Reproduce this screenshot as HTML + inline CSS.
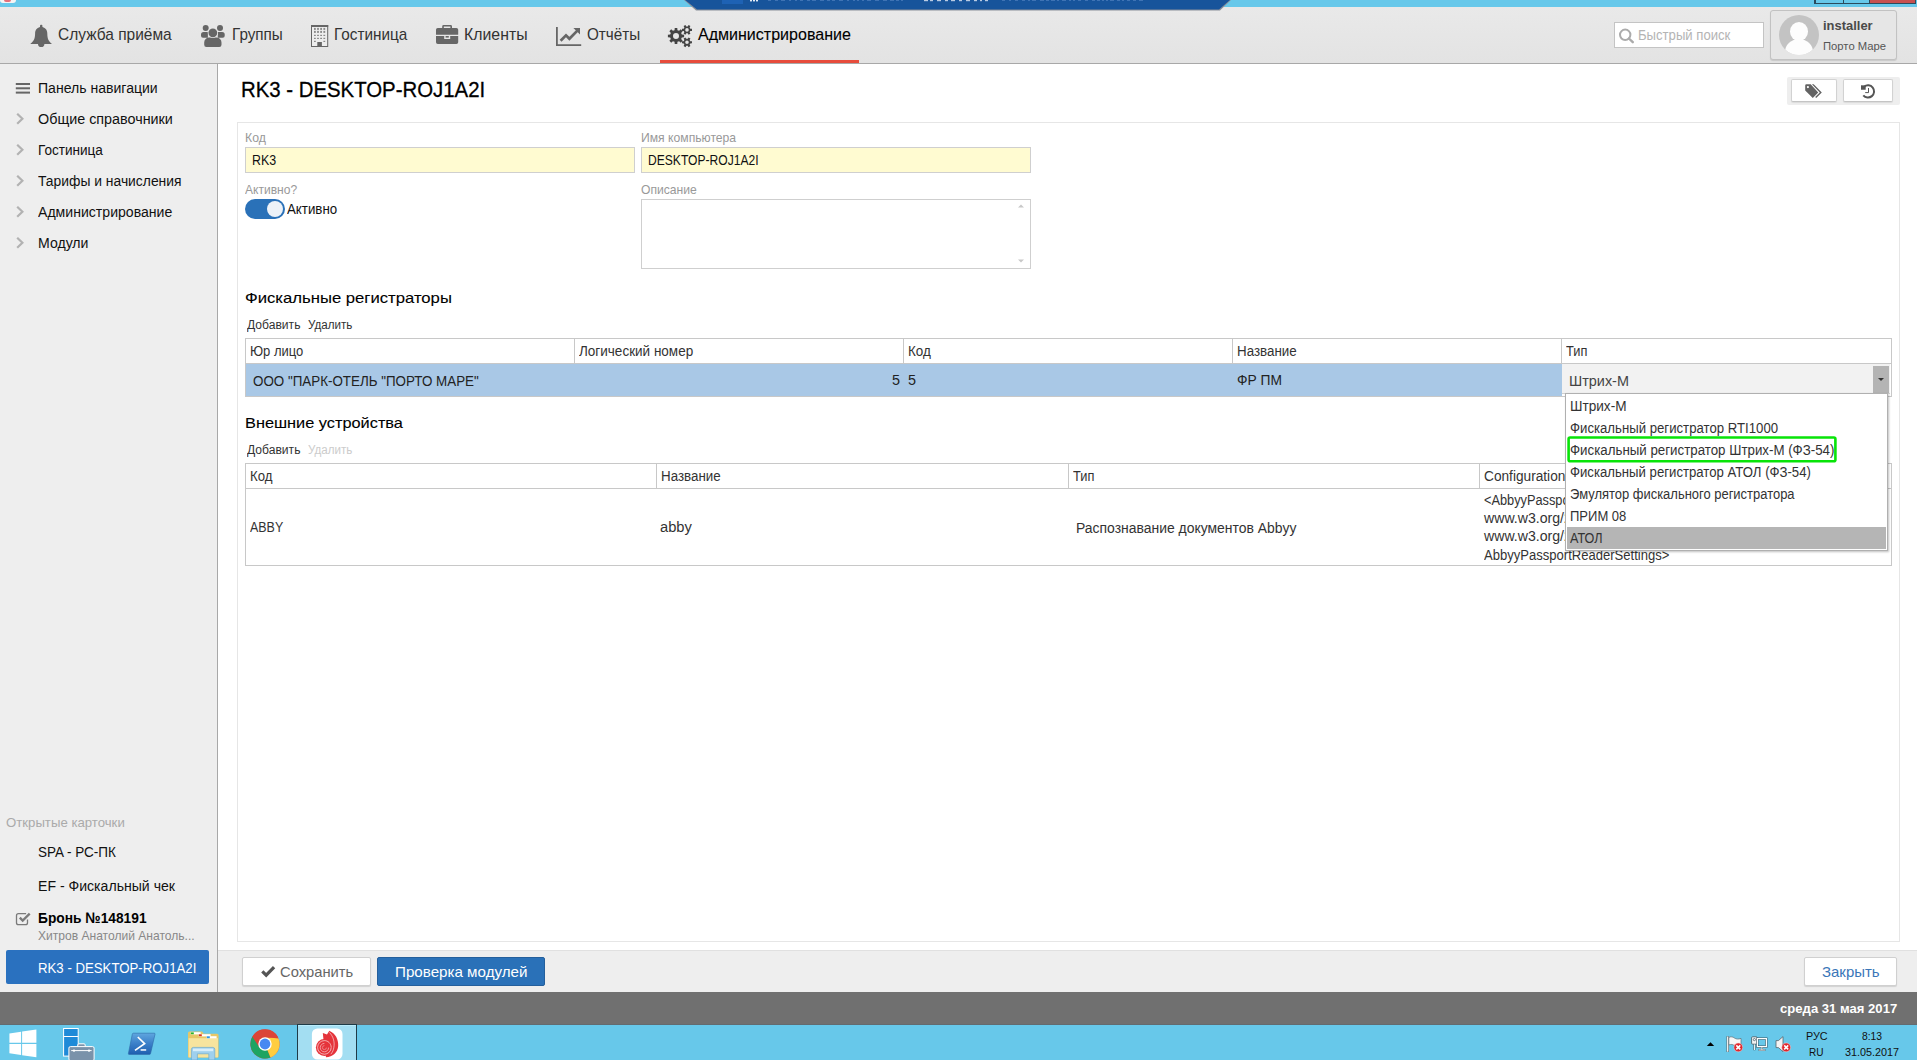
<!DOCTYPE html>
<html lang="ru"><head><meta charset="utf-8"><title>RK3 - DESKTOP-ROJ1A2I</title>
<style>
*{box-sizing:border-box;margin:0;padding:0}
html,body{width:1917px;height:1060px;overflow:hidden;background:#fff;font-family:"Liberation Sans",sans-serif}
body{position:relative}
.a,.t,svg{position:absolute}
.t{white-space:nowrap;line-height:1;display:block;transform-origin:0 0}

</style></head>
<body>
<!-- window title strip -->
<div class="a" style="left:0;top:0;width:1917px;height:7px;background:#67c8ea"></div>
<!-- navbar -->
<div class="a" style="left:0;top:7px;width:1917px;height:57px;background:linear-gradient(#e9e9e9,#e3e3e3);border-bottom:1px solid #a8a8a8"></div>
<!-- rdp tab -->
<svg style="left:680px;top:0" width="556" height="12" viewBox="0 0 556 12"><polygon points="4,0 551,0 540,10.5 16,10.5" fill="#8a8f99"/><polygon points="5,0 550,0 539,9.5 17,9.5" fill="#17549b"/><rect x="42" y="0" width="21" height="4" fill="#1e62b4"/><g fill="#e6edf6"><rect x="70" y="0" width="2" height="1.4"/><rect x="73" y="0" width="2" height="1.4"/><rect x="76" y="0" width="2" height="1.4"/></g><g fill="#3f73b4"><rect x="88" y="0" width="3" height="1"/><rect x="95" y="0" width="3" height="1"/><rect x="101" y="0" width="4" height="1"/><rect x="109" y="0" width="2" height="1"/><rect x="115" y="0" width="2" height="1"/><rect x="120" y="0" width="3" height="1"/><rect x="127" y="0" width="3" height="1"/><rect x="132" y="0" width="4" height="1"/><rect x="140" y="0" width="4" height="1"/><rect x="147" y="0" width="3" height="1"/><rect x="152" y="0" width="3" height="1"/><rect x="159" y="0" width="4" height="1"/><rect x="167" y="0" width="2" height="1"/><rect x="173" y="0" width="2" height="1"/><rect x="177" y="0" width="2" height="1"/><rect x="182" y="0" width="2" height="1"/><rect x="187" y="0" width="4" height="1"/><rect x="195" y="0" width="4" height="1"/><rect x="203" y="0" width="4" height="1"/><rect x="210" y="0" width="4" height="1"/><rect x="216" y="0" width="3" height="1"/><rect x="221" y="0" width="2" height="1"/></g><g fill="#b9cbe3"><rect x="244" y="0" width="4" height="1.2"/><rect x="250" y="0" width="3" height="1.2"/><rect x="257" y="0" width="4" height="1.2"/><rect x="265" y="0" width="3" height="1.2"/><rect x="271" y="0" width="4" height="1.2"/><rect x="279" y="0" width="3" height="1.2"/><rect x="286" y="0" width="4" height="1.2"/><rect x="294" y="0" width="3" height="1.2"/><rect x="300" y="0" width="2" height="1.2"/><rect x="305" y="0" width="3" height="1.2"/></g><g fill="#3f73b4"><rect x="322" y="0" width="3" height="1"/><rect x="329" y="0" width="2" height="1"/><rect x="335" y="0" width="3" height="1"/><rect x="342" y="0" width="3" height="1"/><rect x="348" y="0" width="2" height="1"/><rect x="352" y="0" width="4" height="1"/><rect x="360" y="0" width="4" height="1"/><rect x="366" y="0" width="3" height="1"/><rect x="371" y="0" width="4" height="1"/><rect x="377" y="0" width="2" height="1"/><rect x="382" y="0" width="4" height="1"/><rect x="389" y="0" width="2" height="1"/><rect x="393" y="0" width="2" height="1"/><rect x="398" y="0" width="3" height="1"/><rect x="405" y="0" width="3" height="1"/><rect x="412" y="0" width="3" height="1"/><rect x="417" y="0" width="3" height="1"/><rect x="422" y="0" width="2" height="1"/><rect x="426" y="0" width="2" height="1"/><rect x="430" y="0" width="4" height="1"/><rect x="437" y="0" width="3" height="1"/><rect x="442" y="0" width="2" height="1"/><rect x="447" y="0" width="3" height="1"/><rect x="453" y="0" width="3" height="1"/><rect x="459" y="0" width="4" height="1"/></g></svg>
<!-- window buttons -->
<div class="a" style="left:1814px;top:0;width:102px;height:4px;background:#2b4a5c"></div>
<div class="a" style="left:1816px;top:0;width:27px;height:3px;background:#67c8ea"></div>
<div class="a" style="left:1844px;top:0;width:25px;height:3px;background:#67c8ea"></div>
<div class="a" style="left:1870px;top:0;width:45px;height:3px;background:#c75050"></div>
<!-- app icon top-left -->
<div class="a" style="left:0;top:0;width:16px;height:3px;background:#f4f4f4;border-radius:0 0 4px 4px"></div>
<div class="a" style="left:4px;top:0;width:7px;height:2px;background:#e4707a;border-radius:0 0 4px 4px"></div>
<!-- active nav underline -->
<div class="a" style="left:660px;top:60px;width:199px;height:3px;background:#e74c3c"></div>
<!-- search -->
<div class="a" style="left:1614px;top:22px;width:150px;height:26px;background:#fff;border:1px solid #c4c4c4"></div>
<!-- user box -->
<div class="a" style="left:1770px;top:10px;width:127px;height:50px;background:#e6e6e6;border:1px solid #c2c2c2;border-radius:3px;box-shadow:0 1px 1px rgba(0,0,0,.12)"></div>
<div class="a" style="left:1779px;top:15px;width:40px;height:40px;border-radius:50%;background:#c3c3c3;overflow:hidden"><div class="a" style="left:11px;top:7px;width:18px;height:19px;border-radius:50%;background:#fdfdfd"></div><div class="a" style="left:6px;top:24px;width:28px;height:26px;border-radius:50% 50% 0 0;background:#fdfdfd"></div></div>
<!-- sidebar -->
<div class="a" style="left:0;top:64px;width:218px;height:928px;background:#eee;border-right:1px solid #a8a8a8"></div>
<div class="a" style="left:6px;top:950px;width:203px;height:34px;background:#2a71bf;border-radius:2px"></div>
<!-- header button group -->
<div class="a" style="left:1787px;top:77px;width:113px;height:28px;background:#eee;border-radius:2px"></div>
<div class="a" style="left:1791px;top:79px;width:46px;height:23px;background:#fff;border:1px solid #d2d2d2;border-bottom-color:#c4c4c4;border-radius:2px;box-shadow:0 1px 1px rgba(0,0,0,.08)"></div>
<div class="a" style="left:1843px;top:79px;width:50px;height:23px;background:#fff;border:1px solid #d2d2d2;border-bottom-color:#c4c4c4;border-radius:2px;box-shadow:0 1px 1px rgba(0,0,0,.08)"></div>
<!-- panel -->
<div class="a" style="left:237px;top:122px;width:1663px;height:820px;border:1px solid #e6e6e6;background:#fff"></div>
<!-- inputs -->
<div class="a" style="left:245px;top:147px;width:390px;height:26px;background:#fffbd1;border:1px solid #cfcfcf"></div>
<div class="a" style="left:641px;top:147px;width:390px;height:26px;background:#fffbd1;border:1px solid #cfcfcf"></div>
<div class="a" style="left:245px;top:199px;width:40px;height:20px;background:#2a71b8;border-radius:10px"></div>
<div class="a" style="left:267px;top:201px;width:16px;height:16px;background:#edf2f8;border-radius:50%"></div>
<div class="a" style="left:641px;top:199px;width:390px;height:70px;background:#fff;border:1px solid #cfcfcf"></div>
<svg style="left:1017px;top:203px" width="8" height="62" viewBox="0 0 8 62"><polygon points="1,4.5 4,1.5 7,4.5" fill="#c8c8c8"/><polygon points="1,56.5 4,59.5 7,56.5" fill="#c8c8c8"/></svg>
<!-- table 1 -->
<div class="a" style="left:245px;top:338px;width:1647px;height:59px;border:1px solid #c8c8c8;background:#fff"></div>
<div class="a" style="left:246px;top:364px;width:1316px;height:32px;background:#a9c8e6"></div>
<div class="a" style="left:245px;top:363px;width:1647px;height:1px;background:#c8c8c8"></div>
<div class="a" style="left:574px;top:339px;width:1px;height:24px;background:#c8c8c8"></div>
<div class="a" style="left:903px;top:339px;width:1px;height:24px;background:#c8c8c8"></div>
<div class="a" style="left:1232px;top:339px;width:1px;height:24px;background:#c8c8c8"></div>
<div class="a" style="left:1561px;top:339px;width:1px;height:24px;background:#c8c8c8"></div>
<!-- select -->
<div class="a" style="left:1562px;top:364px;width:328px;height:30px;background:#f2f2f2;border-bottom:1px solid #d0d0d0"></div>
<div class="a" style="left:1873px;top:366px;width:16px;height:27px;background:#b4b4b4"></div>
<svg style="left:1877px;top:377px" width="8" height="5" viewBox="0 0 8 5"><polygon points="1,1 7,1 4,4" fill="#333"/></svg>
<!-- table 2 -->
<div class="a" style="left:245px;top:463px;width:1647px;height:103px;border:1px solid #c8c8c8;background:#fff"></div>
<div class="a" style="left:245px;top:488px;width:1647px;height:1px;background:#c8c8c8"></div>
<div class="a" style="left:656px;top:464px;width:1px;height:24px;background:#c8c8c8"></div>
<div class="a" style="left:1068px;top:464px;width:1px;height:24px;background:#c8c8c8"></div>
<div class="a" style="left:1479px;top:464px;width:1px;height:24px;background:#c8c8c8"></div>
<!-- dropdown list -->
<div class="a" style="left:1565px;top:393px;width:323px;height:158px;background:#fff;border:1px solid #b0b0b0;box-shadow:1px 1px 2px rgba(0,0,0,.25);z-index:4"></div>
<div class="a" style="left:1567px;top:527px;width:319px;height:22px;background:#b5b5b5;z-index:5"></div>
<svg style="left:1560px;top:430px;z-index:7" width="290" height="40" viewBox="1560 430 290 40"><rect x="1568.6" y="437.5" width="266.8" height="23.8" rx="1.5" fill="none" stroke="#08e408" stroke-width="2.6"/></svg>
<!-- bottom bar -->
<div class="a" style="left:218px;top:950px;width:1699px;height:42px;background:#eee;border-top:1px solid #e0e0e0"></div>
<div class="a" style="left:242px;top:957px;width:129px;height:29px;background:#fff;border:1px solid #d0d0d0;border-radius:2px;box-shadow:0 1px 1px rgba(0,0,0,.12)"></div>
<div class="a" style="left:377px;top:957px;width:168px;height:29px;background:#2a71b8;border:1px solid #245f9c;border-radius:2px"></div>
<div class="a" style="left:1804px;top:957px;width:93px;height:29px;background:#fff;border:1px solid #d0d0d0;border-radius:2px;box-shadow:0 1px 1px rgba(0,0,0,.12)"></div>
<!-- status bar -->
<div class="a" style="left:0;top:992px;width:1917px;height:32px;background:#707070"></div>
<!-- taskbar -->
<div class="a" style="left:0;top:1024px;width:1917px;height:36px;background:#67c8ea"></div>
<div class="a" style="left:0;top:1024px;width:1917px;height:1px;background:#636b70"></div><div class="a" style="left:297px;top:1024px;width:60px;height:36px;background:#a3def2;border:1px solid #1f3b47;border-bottom:0;box-shadow:inset 0 1px 0 #b9ecfb"></div>
<svg style="left:0;top:0;z-index:3" width="1917" height="1060" viewBox="0 0 1917 1060"><g fill="#666"><rect x="40" y="24.7" width="2.4" height="3.2" rx="1"/><path d="M35.1,33.4 C35.1,29.2 37.9,26.9 41.2,26.9 C44.5,26.9 47.3,29.2 47.3,33.4 C47.3,38.6 48.7,41.2 51.6,43.6 L51.6,44 L30.6,44 L30.6,43.6 C33.6,41.2 35.1,38.6 35.1,33.4 Z"/><path d="M38,44 h6.4 a3.2,3.1 0 0 1 -6.4,0 Z"/></g>
<g fill="#666"><circle cx="205.7" cy="28" r="3"/><circle cx="220" cy="28" r="3"/><path d="M201,34.4 a2.5,2.5 0 0 1 2.5,-2.5 h4.4 v5.9 h-4.9 a2,2 0 0 1 -2,-2 Z"/><path d="M224.7,34.4 a2.5,2.5 0 0 0 -2.5,-2.5 h-4.4 v5.9 h4.9 a2,2 0 0 0 2,-2 Z"/><path d="M204.2,42.6 a5,5 0 0 1 5,-5 h7.3 a5,5 0 0 1 5,5 v2.2 a2.2,2.2 0 0 1 -2.2,2.2 h-12.9 a2.2,2.2 0 0 1 -2.2,-2.2 Z"/><circle cx="212.85" cy="32.8" r="5.1" fill="#e8e8e8"/><circle cx="212.85" cy="32.8" r="4.4"/></g>
<rect x="311.5" y="25.5" width="16.2" height="21" fill="#ededed" stroke="#666" stroke-width="1"/><rect x="311" y="25" width="17.2" height="2" fill="#666"/><rect x="317.3" y="42" width="4.6" height="4.5" fill="#666"/><rect x="314.0" y="27.9" width="1.8" height="2" fill="#8a8a8a"/><rect x="314.0" y="30.9" width="1.8" height="2" fill="#8a8a8a"/><rect x="314.0" y="34.8" width="1.8" height="1.2" fill="#8a8a8a"/><rect x="314.0" y="37.8" width="1.8" height="1.2" fill="#8a8a8a"/><rect x="314.0" y="40.8" width="1.8" height="1.2" fill="#8a8a8a"/><rect x="317.1" y="27.9" width="1.8" height="2" fill="#8a8a8a"/><rect x="317.1" y="30.9" width="1.8" height="2" fill="#8a8a8a"/><rect x="317.1" y="34.8" width="1.8" height="1.2" fill="#8a8a8a"/><rect x="317.1" y="37.8" width="1.8" height="1.2" fill="#8a8a8a"/><rect x="320.2" y="27.9" width="1.8" height="2" fill="#8a8a8a"/><rect x="320.2" y="30.9" width="1.8" height="2" fill="#8a8a8a"/><rect x="320.2" y="34.8" width="1.8" height="1.2" fill="#8a8a8a"/><rect x="320.2" y="37.8" width="1.8" height="1.2" fill="#8a8a8a"/><rect x="323.4" y="27.9" width="1.8" height="2" fill="#8a8a8a"/><rect x="323.4" y="30.9" width="1.8" height="2" fill="#8a8a8a"/><rect x="323.4" y="34.8" width="1.8" height="1.2" fill="#8a8a8a"/><rect x="323.4" y="37.8" width="1.8" height="1.2" fill="#8a8a8a"/><rect x="323.4" y="40.8" width="1.8" height="1.2" fill="#8a8a8a"/>
<g fill="#666"><path d="M442.2,28.4 v-2 a1.4,1.4 0 0 1 1.4,-1.4 h7 a1.4,1.4 0 0 1 1.4,1.4 v2 h-1.6 v-1.8 h-6.6 v1.8 Z"/><path d="M436,29.8 a1.8,1.8 0 0 1 1.8,-1.8 h18.6 a1.8,1.8 0 0 1 1.8,1.8 v5 h-22.2 Z"/><path d="M436,36 h8.2 v2.9 h6 v-2.9 h8 v6.2 a1.8,1.8 0 0 1 -1.8,1.8 h-18.6 a1.8,1.8 0 0 1 -1.8,-1.8 Z"/><rect x="445.6" y="36" width="3.2" height="1.6"/></g>
<g fill="#666"><path d="M556,27 h1.8 v17.2 h23.4 v1.8 h-25.2 Z"/><path d="M573.4,28 h6.6 v6.6 Z"/><path d="M560.6,40.8 L566,35.4 L569.4,38.8 L577.4,30.6" fill="none" stroke="#666" stroke-width="2.7"/></g>
<path d="M677.45,41.82 L677.28,44.10 L674.72,44.10 L674.55,41.82 L672.91,41.14 L671.18,42.63 L669.37,40.82 L670.86,39.09 L670.18,37.45 L667.90,37.28 L667.90,34.72 L670.18,34.55 L670.86,32.91 L669.37,31.18 L671.18,29.37 L672.91,30.86 L674.55,30.18 L674.72,27.90 L677.28,27.90 L677.45,30.18 L679.09,30.86 L680.82,29.37 L682.63,31.18 L681.14,32.91 L681.82,34.55 L684.10,34.72 L684.10,37.28 L681.82,37.45 L681.14,39.09 L682.63,40.82 L680.82,42.63 L679.09,41.14 Z M673.00,36.00 a3.00,3.00 0 1,0 6.00,0 a3.00,3.00 0 1,0 -6.00,0 Z" fill="#444" fill-rule="evenodd"/>
<path d="M690.32,28.78 L691.99,28.84 L691.99,30.96 L690.32,31.02 L689.63,32.21 L690.41,33.69 L688.58,34.75 L687.69,33.33 L686.31,33.33 L685.42,34.75 L683.59,33.69 L684.37,32.21 L683.68,31.02 L682.01,30.96 L682.01,28.84 L683.68,28.78 L684.37,27.59 L683.59,26.11 L685.42,25.05 L686.31,26.47 L687.69,26.47 L688.58,25.05 L690.41,26.11 L689.63,27.59 Z M685.20,29.90 a1.80,1.80 0 1,0 3.60,0 a1.80,1.80 0 1,0 -3.60,0 Z" fill="#444" fill-rule="evenodd"/>
<path d="M690.32,41.18 L691.99,41.24 L691.99,43.36 L690.32,43.42 L689.63,44.61 L690.41,46.09 L688.58,47.15 L687.69,45.73 L686.31,45.73 L685.42,47.15 L683.59,46.09 L684.37,44.61 L683.68,43.42 L682.01,43.36 L682.01,41.24 L683.68,41.18 L684.37,39.99 L683.59,38.51 L685.42,37.45 L686.31,38.87 L687.69,38.87 L688.58,37.45 L690.41,38.51 L689.63,39.99 Z M685.20,42.30 a1.80,1.80 0 1,0 3.60,0 a1.80,1.80 0 1,0 -3.60,0 Z" fill="#444" fill-rule="evenodd"/>
<g fill="none" stroke="#ababab" stroke-width="2"><circle cx="1625.2" cy="34.8" r="5.2"/><path d="M1628.9,38.5 L1632.8,42.2" stroke-width="2.4" stroke-linecap="round"/></g>
<g fill="#666"><rect x="15.8" y="83" width="14.2" height="2"/><rect x="15.8" y="87.3" width="14.2" height="2"/><rect x="15.8" y="91.6" width="14.2" height="2"/></g>
<path d="M17.2,113.8 L22.4,118.8 L17.2,123.8" fill="none" stroke="#b2b2b2" stroke-width="2.2"/>
<path d="M17.2,144.8 L22.4,149.8 L17.2,154.8" fill="none" stroke="#b2b2b2" stroke-width="2.2"/>
<path d="M17.2,175.8 L22.4,180.8 L17.2,185.8" fill="none" stroke="#b2b2b2" stroke-width="2.2"/>
<path d="M17.2,206.8 L22.4,211.8 L17.2,216.8" fill="none" stroke="#b2b2b2" stroke-width="2.2"/>
<path d="M17.2,237.8 L22.4,242.8 L17.2,247.8" fill="none" stroke="#b2b2b2" stroke-width="2.2"/>
<g fill="none" stroke="#7a7a7a"><path d="M27.5,919.5 v3.2 a2,2 0 0 1 -2,2 h-7 a2,2 0 0 1 -2,-2 v-7 a2,2 0 0 1 2,-2 h7.6" stroke-width="1.3"/><path d="M19.8,917.6 l2.9,3 l7,-7" stroke-width="2.3"/></g>
<g fill="#636363"><path fill-rule="evenodd" d="M1805.2,85.4 a1.2,1.2 0 0 1 1.2,-1.2 h4.3 l7.5,8.3 l-5.4,5.4 l-7.6,-7.4 Z M1806.8,87.1 a1.1,1.1 0 1 0 2.2,0 a1.1,1.1 0 1 0 -2.2,0 Z"/><path d="M1811.9,84.2 h1.8 l8.1,8.3 l-5.6,5.4 l-1,-1 l4.6,-4.4 Z"/></g>
<g fill="none" stroke="#555" stroke-width="2"><path d="M1864.2,86.6 A6.1,6.1 0 1 1 1863.3,95.3"/></g><path d="M1861,85.2 l4.7,0.3 l0,4.3 l-4.7,0 Z" fill="#555"/><path d="M1868.5,88 v4.6 h-3.3" fill="none" stroke="#555" stroke-width="1"/>
<path d="M262.3,971.4 l3.9,3.8 l7.9,-8" fill="none" stroke="#555" stroke-width="3.2"/>
<g fill="#fff"><path d="M9.4,1033.4 L21.1,1031.8 V1042.8 H9.4 Z"/><path d="M22.1,1031.6 L36.4,1029.6 V1042.8 H22.1 Z"/><path d="M9.4,1044 H21.1 V1055 L9.4,1053.3 Z"/><path d="M22.1,1044 H36.4 V1057.2 L22.1,1055.2 Z"/></g>
<rect x="63.6" y="1028.5" width="14.6" height="27.6" fill="#1e8ad8" stroke="#fff" stroke-width="1"/><rect x="63.6" y="1036" width="14.6" height="1" fill="#fff"/><path d="M77.8,1046.6 v-1.6 a1.2,1.2 0 0 1 1.2,-1.2 h5 a1.2,1.2 0 0 1 1.2,1.2 v1.6" fill="#7a92aa" stroke="#fff" stroke-width="1"/><rect x="68.9" y="1046.6" width="25.2" height="14" rx="1.5" fill="#7a92aa" stroke="#fff" stroke-width="1"/><rect x="71.2" y="1050.1" width="20.4" height="1" fill="#fff"/><circle cx="74" cy="1050.6" r="1.2" fill="#fff"/><circle cx="89" cy="1050.6" r="1.2" fill="#fff"/>
<defs><linearGradient id="ps" x1="0" y1="0" x2="0" y2="1"><stop offset="0" stop-color="#5fa6df"/><stop offset="0.5" stop-color="#3b7fc8"/><stop offset="1" stop-color="#1f5fb0"/></linearGradient></defs><path d="M133.5,1033.2 H154.2 a0.8,0.8 0 0 1 0.8,1 L150.6,1053.4 a1.2,1.2 0 0 1 -1.2,1 H129.2 a0.8,0.8 0 0 1 -0.8,-1 L132.3,1034.2 a1.2,1.2 0 0 1 1.2,-1 Z" fill="url(#ps)" stroke="#2d6aa8" stroke-width="0.6"/><path d="M137.8,1037 L144.6,1043.6 L135,1050.4" fill="none" stroke="#fff" stroke-width="1.7"/><rect x="140.6" y="1049.2" width="5.6" height="1.5" fill="#fff"/>
<path d="M188,1033 a1.5,1.5 0 0 1 1.5,-1.5 h12.6 l1.6,2.2 h13.4 a1.5,1.5 0 0 1 1.5,1.5 v21.4 a1,1 0 0 1 -1,1 h-28.6 a1,1 0 0 1 -1,-1 Z" fill="#e6c766"/><rect x="188.6" y="1038.2" width="29.4" height="19.2" fill="#f7e49e"/><rect x="190.6" y="1032.2" width="10" height="2.2" fill="#fff"/><rect x="190.8" y="1032.4" width="3" height="1.8" fill="#23b42c"/><rect x="198.6" y="1034.2" width="12" height="2.2" fill="#fff"/><rect x="198.8" y="1034.3" width="3" height="1.9" fill="#d5331f"/><rect x="206.6" y="1036.2" width="10" height="2.2" fill="#fff"/><rect x="206.8" y="1036.3" width="3" height="1.9" fill="#2c97e8"/><path d="M191.4,1060 v-10.6 a2,2 0 0 1 2,-2 h19.4 a2,2 0 0 1 2,2 v10.6 h-6 v-6.2 h-11.4 v6.2 Z" fill="#9fd0ee" stroke="#5ea3d0" stroke-width="0.6"/><rect x="193" y="1048.6" width="20.2" height="2.6" fill="#d8eefb"/>
<circle cx="265" cy="1044" r="14.6" fill="#db4437"/><path d="M265,1044 L252.36,1036.70 A14.6,14.6 0 0 0 270.47,1057.54 L265,1044 Z" fill="#1da462"/><path d="M265,1044 L270.47,1057.54 A14.6,14.6 0 0 0 278.54,1038.53 L271.6,1037.8 L265,1037.4 Z" fill="#ffcd40"/><path d="M265,1037.4 L278.2,1037.4 A14.6,14.6 0 0 0 252.36,1036.70 L259.3,1047.3 Z" fill="#db4437"/><circle cx="265" cy="1044" r="6.7" fill="#fff"/><circle cx="265" cy="1044" r="5.4" fill="#4688f1"/>
<rect x="311.9" y="1028.5" width="30.6" height="31" rx="5.5" fill="#fff"/><path d="M322.8,1033 L327,1034.4 L329.3,1030.8 C335.4,1033.4 338.6,1039.4 338.2,1046 C337.8,1052.4 332.6,1057.2 326,1057.2 L324,1047 L323.4,1038.8 Z" fill="#e5343b"/><circle cx="324.4" cy="1047.4" r="8.5" fill="#e5343b"/><path d="M329.4,1032.4 C333.2,1036.4 334.8,1041.6 333.9,1047.2 C333.5,1050 332.4,1052.4 330.8,1054.2" fill="none" stroke="#fff" stroke-width="0.55"/><path d="M331.2,1047.4 a6.8,6.8 0 1 1 -6.8,-6.8 c3.6,0 6.6,2.8 6.8,6.6" fill="none" stroke="#fff" stroke-width="0.6"/><path d="M328.6,1047.6 a4.2,4.2 0 1 1 -4.2,-4.2" fill="none" stroke="#f6b5b8" stroke-width="0.8"/><path d="M326.4,1047.6 a2,2 0 1 1 -2,-2" fill="none" stroke="#f19a9e" stroke-width="0.7"/>
<path d="M1706.8,1045.9 L1710.5,1042.2 L1714.2,1045.9 Z" fill="#000"/>
<path d="M1727.7,1036.2 v15.8" stroke="#555" stroke-width="2.2" fill="none"/><path d="M1727.7,1036.4 v15.4" stroke="#fff" stroke-width="1.2" fill="none"/><path d="M1728.8,1037.4 c2.4,-1 4,-0.6 5.6,0.6 c1.8,1.2 4,1.4 6.6,0.4 v7.6 c-2.6,1 -4.8,0.8 -6.6,-0.4 c-1.6,-1.2 -3.2,-1.6 -5.6,-0.6 Z" fill="#f7f7f7" stroke="#5d6d75" stroke-width="0.7"/><circle cx="1738.3" cy="1047.4" r="4.4" fill="#e0262c" stroke="#f5d5d5" stroke-width="0.5"/><path d="M1736.3,1045.4 l4,4 M1740.3,1045.4 l-4,4" stroke="#fff" stroke-width="1.5"/>
<rect x="1751.6" y="1036.8" width="5.6" height="7.4" rx="1" fill="#f4f4f4" stroke="#3d5560" stroke-width="0.8"/><circle cx="1754.4" cy="1039.6" r="1.1" fill="none" stroke="#3d5560" stroke-width="0.7"/><path d="M1754.4,1044.4 v5.8" stroke="#3d5560" stroke-width="2" fill="none"/><path d="M1754.4,1044.4 v5.6" stroke="#fff" stroke-width="1" fill="none"/><rect x="1757.4" y="1038.6" width="9" height="8" fill="#67c8ea" stroke="#3d5560" stroke-width="2.2"/><rect x="1757.4" y="1038.6" width="9" height="8" fill="none" stroke="#fff" stroke-width="1.2"/><path d="M1761.9,1047.4 v2 M1758.6,1050 h6.8" stroke="#3d5560" stroke-width="2" fill="none"/><path d="M1761.9,1047.2 v2.4 M1758.8,1050 h6.4" stroke="#fff" stroke-width="1" fill="none"/>
<path d="M1776,1040.6 h2.4 l4.6,-4 v15 l-4.6,-4 h-2.4 Z" fill="#f4f4f4" stroke="#55656d" stroke-width="0.8"/><circle cx="1786.2" cy="1047.4" r="4.4" fill="#e0262c" stroke="#f5d5d5" stroke-width="0.5"/><path d="M1784.2,1045.4 l4,4 M1788.2,1045.4 l-4,4" stroke="#fff" stroke-width="1.5"/></svg>
<span class="t" style="left:57.60px;top:26px;font-size:17px;color:#333;transform:scaleX(0.9119);">Служба приёма</span>
<span class="t" style="left:231.69px;top:26px;font-size:17px;color:#333;transform:scaleX(0.8973);">Группы</span>
<span class="t" style="left:333.99px;top:26px;font-size:17px;color:#333;transform:scaleX(0.9001);">Гостиница</span>
<span class="t" style="left:463.83px;top:26px;font-size:17px;color:#333;transform:scaleX(0.9318);">Клиенты</span>
<span class="t" style="left:586.69px;top:26px;font-size:17px;color:#333;transform:scaleX(0.8979);">Отчёты</span>
<span class="t" style="left:697.59px;top:26px;font-size:17px;color:#000;transform:scaleX(0.9429);-webkit-text-stroke:0.1px #000;">Администрирование</span>
<span class="t" style="left:1637.68px;top:28px;font-size:14px;color:#b4b4b4;transform:scaleX(0.9374);">Быстрый поиск</span>
<span class="t" style="left:1822.68px;top:19px;font-size:13.5px;color:#4a4a4a;font-weight:bold;transform:scaleX(0.9587);">installer</span>
<span class="t" style="left:1822.63px;top:41px;font-size:11px;color:#555;transform:scaleX(1.0234);">Порто Маре</span>
<span class="t" style="left:37.68px;top:80px;font-size:15.5px;color:#111;transform:scaleX(0.9066);">Панель навигации</span>
<span class="t" style="left:37.63px;top:111px;font-size:15.5px;color:#111;transform:scaleX(0.9256);">Общие справочники</span>
<span class="t" style="left:37.72px;top:142px;font-size:15.5px;color:#111;transform:scaleX(0.8746);">Гостиница</span>
<span class="t" style="left:37.64px;top:173px;font-size:15.5px;color:#111;transform:scaleX(0.8945);">Тарифы и начисления</span>
<span class="t" style="left:37.71px;top:204px;font-size:15.5px;color:#111;transform:scaleX(0.9086);">Администрирование</span>
<span class="t" style="left:37.63px;top:235px;font-size:15.5px;color:#111;transform:scaleX(0.9087);">Модули</span>
<span class="t" style="left:5.70px;top:816px;font-size:13.5px;color:#aaa;transform:scaleX(0.9766);">Открытые карточки</span>
<span class="t" style="left:37.68px;top:844px;font-size:15.5px;color:#111;transform:scaleX(0.8710);">SPA - РС-ПК</span>
<span class="t" style="left:37.61px;top:878px;font-size:15.5px;color:#111;transform:scaleX(0.9084);">EF - Фискальный чек</span>
<span class="t" style="left:38.02px;top:910px;font-size:15.5px;color:#000;font-weight:bold;transform:scaleX(0.8877);">Бронь №148191</span>
<span class="t" style="left:37.54px;top:929px;font-size:13px;color:#888;transform:scaleX(0.9276);">Хитров Анатолий Анатоль...</span>
<span class="t" style="left:37.58px;top:960px;font-size:15.5px;color:#fff;transform:scaleX(0.8525);">RK3 - DESKTOP-ROJ1A2I</span>
<span class="t" style="left:240.53px;top:79px;font-size:22.3px;color:#000;transform:scaleX(0.9136);-webkit-text-stroke:0.3px #000;">RK3 - DESKTOP-ROJ1A2I</span>
<span class="t" style="left:244.85px;top:131px;font-size:13px;color:#999;transform:scaleX(0.9422);">Код</span>
<span class="t" style="left:251.56px;top:153px;font-size:14px;color:#111;transform:scaleX(0.8877);">RK3</span>
<span class="t" style="left:640.83px;top:131px;font-size:13px;color:#999;transform:scaleX(0.9353);">Имя компьютера</span>
<span class="t" style="left:647.58px;top:153px;font-size:14px;color:#111;transform:scaleX(0.8626);">DESKTOP-ROJ1A2I</span>
<span class="t" style="left:244.50px;top:183px;font-size:13px;color:#999;transform:scaleX(0.9258);">Активно?</span>
<span class="t" style="left:286.53px;top:202px;font-size:14px;color:#111;transform:scaleX(0.9495);">Активно</span>
<span class="t" style="left:640.52px;top:183px;font-size:13px;color:#999;transform:scaleX(0.9333);">Описание</span>
<span class="t" style="left:244.60px;top:290px;font-size:15px;color:#000;transform:scaleX(1.1117);-webkit-text-stroke:0.1px #000;">Фискальные регистраторы</span>
<span class="t" style="left:246.77px;top:319px;font-size:12.5px;color:#333;transform:scaleX(0.9678);">Добавить</span>
<span class="t" style="left:307.64px;top:319px;font-size:12.5px;color:#333;transform:scaleX(0.9302);">Удалить</span>
<span class="t" style="left:249.90px;top:344px;font-size:14px;color:#333;transform:scaleX(0.9273);">Юр лицо</span>
<span class="t" style="left:578.69px;top:344px;font-size:14px;color:#333;transform:scaleX(0.9645);">Логический номер</span>
<span class="t" style="left:907.54px;top:344px;font-size:14px;color:#333;transform:scaleX(0.9602);">Код</span>
<span class="t" style="left:1236.60px;top:344px;font-size:14px;color:#333;transform:scaleX(0.9537);">Название</span>
<span class="t" style="left:1565.70px;top:344px;font-size:14px;color:#333;transform:scaleX(0.9153);">Тип</span>
<span class="t" style="left:252.72px;top:374px;font-size:14px;color:#222;transform:scaleX(0.9561);">ООО "ПАРК-ОТЕЛЬ "ПОРТО МАРЕ"</span>
<span class="t" style="left:891.71px;top:373px;font-size:14px;color:#222;transform:scaleX(1.0278);">5</span>
<span class="t" style="left:907.56px;top:373px;font-size:14px;color:#222;transform:scaleX(1.0278);">5</span>
<span class="t" style="left:1236.69px;top:373px;font-size:14px;color:#222;transform:scaleX(0.9854);">ФР ПМ</span>
<span class="t" style="left:1568.65px;top:374px;font-size:14px;color:#444;transform:scaleX(1.0296);">Штрих-М</span>
<span class="t" style="left:244.55px;top:415px;font-size:15px;color:#000;transform:scaleX(1.0884);-webkit-text-stroke:0.1px #000;">Внешние устройства</span>
<span class="t" style="left:246.77px;top:444px;font-size:12.5px;color:#333;transform:scaleX(0.9678);">Добавить</span>
<span class="t" style="left:307.64px;top:444px;font-size:12.5px;color:#ccc;transform:scaleX(0.9302);">Удалить</span>
<span class="t" style="left:249.88px;top:469px;font-size:14px;color:#333;transform:scaleX(0.9440);">Код</span>
<span class="t" style="left:660.60px;top:469px;font-size:14px;color:#333;transform:scaleX(0.9537);">Название</span>
<span class="t" style="left:1072.50px;top:469px;font-size:14px;color:#333;transform:scaleX(0.9153);">Тип</span>
<span class="t" style="left:1483.57px;top:469px;font-size:14px;color:#333;transform:scaleX(0.9770);">Configuration</span>
<span class="t" style="left:249.57px;top:520px;font-size:14px;color:#333;transform:scaleX(0.8900);">ABBY</span>
<span class="t" style="left:659.69px;top:520px;font-size:14px;color:#333;transform:scaleX(1.0507);">abby</span>
<span class="t" style="left:1075.51px;top:521px;font-size:14px;color:#333;transform:scaleX(0.9948);">Распознавание документов Abbyy</span>
<span class="t" style="left:1483.69px;top:493px;font-size:14px;color:#333;transform:scaleX(0.9126);">&lt;AbbyyPasspo</span>
<span class="t" style="left:1483.74px;top:511px;font-size:14px;color:#333;transform:scaleX(1.0077);">www.w3.org/2</span>
<span class="t" style="left:1483.74px;top:529px;font-size:14px;color:#333;transform:scaleX(1.0077);">www.w3.org/2</span>
<span class="t" style="left:1483.62px;top:548px;font-size:14px;color:#333;transform:scaleX(0.9320);">AbbyyPassportReaderSettings&gt;</span>
<span class="t" style="left:279.61px;top:964px;font-size:15px;color:#666;transform:scaleX(0.9826);">Сохранить</span>
<span class="t" style="left:394.52px;top:964px;font-size:15px;color:#fff;transform:scaleX(1.0107);">Проверка модулей</span>
<span class="t" style="left:1821.64px;top:964px;font-size:15px;color:#3a76b8;transform:scaleX(0.9979);">Закрыть</span>
<span class="t" style="left:1779.67px;top:1002px;font-size:13px;color:#fff;font-weight:bold;transform:scaleX(1.0073);">среда 31 мая 2017</span>
<span class="t" style="left:1805.67px;top:1031px;font-size:11px;color:#111;transform:scaleX(0.9831);">РУС</span>
<span class="t" style="left:1808.61px;top:1047px;font-size:11px;color:#111;transform:scaleX(0.9135);">RU</span>
<span class="t" style="left:1861.62px;top:1031px;font-size:11px;color:#111;transform:scaleX(0.9379);">8:13</span>
<span class="t" style="left:1844.91px;top:1047px;font-size:11px;color:#111;transform:scaleX(0.9824);">31.05.2017</span>
<span class="t" style="left:1569.76px;top:399px;font-size:14px;color:#333;transform:scaleX(0.9712);z-index:6;">Штрих-М</span>
<span class="t" style="left:1569.52px;top:421px;font-size:14px;color:#333;transform:scaleX(0.9414);z-index:6;">Фискальный регистратор RTI1000</span>
<span class="t" style="left:1569.52px;top:443px;font-size:14px;color:#333;transform:scaleX(0.9502);z-index:6;">Фискальный регистратор Штрих-М (ФЗ-54)</span>
<span class="t" style="left:1569.52px;top:465px;font-size:14px;color:#333;transform:scaleX(0.9403);z-index:6;">Фискальный регистратор АТОЛ (ФЗ-54)</span>
<span class="t" style="left:1569.66px;top:487px;font-size:14px;color:#333;transform:scaleX(0.9254);z-index:6;">Эмулятор фискального регистратора</span>
<span class="t" style="left:1569.91px;top:509px;font-size:14px;color:#333;transform:scaleX(0.9294);z-index:6;">ПРИМ 08</span>
<span class="t" style="left:1569.57px;top:531px;font-size:14px;color:#333;transform:scaleX(0.9014);z-index:6;">АТОЛ</span>

</body></html>
